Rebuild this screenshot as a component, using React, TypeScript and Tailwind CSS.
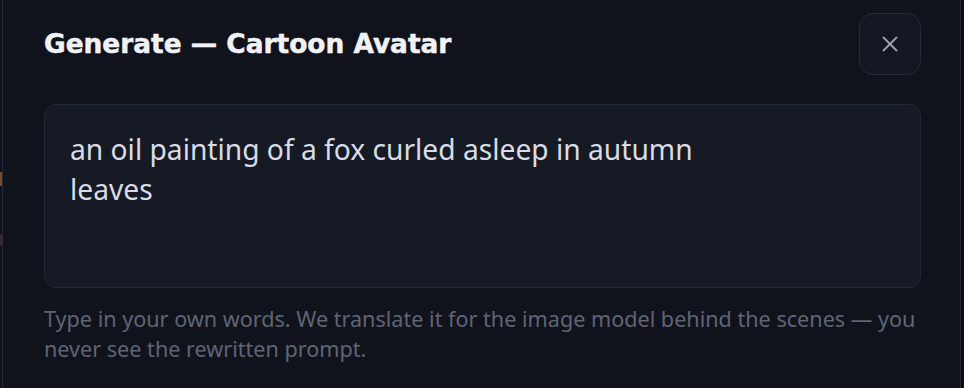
import { X } from "lucide-react";

export default function App() {
  return (
    <div className="flex h-[388px] w-[964px] overflow-hidden bg-[#0b0d14]">
      {/* sliver of the page behind the dialog */}
      <div className="flex w-[2px] flex-col bg-[#0f111a]">
        <div className="h-[172px]" />
        <div className="h-[14px] bg-[#7a4a2a]" />
        <div className="h-[48px]" />
        <div className="h-[12px] bg-[#3a2a30]" />
      </div>

      <div
        className="flex-1 border-x border-[#232838] bg-[#11131c] pl-[41px] pr-[39px] pt-[13px]"
        style={{ fontFamily: '"Noto Sans", "Open Sans", sans-serif' }}
      >
        <div className="flex items-start justify-between">
          <h2
            className="mt-[14px] text-[26.4px] font-bold leading-[34px] text-[#f1f2f6] [-webkit-text-stroke:0.5px_#f1f2f6]"
            style={{ fontFamily: '"DejaVu Sans", Verdana, sans-serif' }}
          >
            Generate — Cartoon Avatar
          </h2>
          <button className="flex h-[62px] w-[62px] items-center justify-center rounded-[14px] border border-[#262b3b] bg-[#141721] text-[#9aa0b2]">
            <X size={26} strokeWidth={1.75} />
          </button>
        </div>

        <div className="mt-[29px] h-[184px] rounded-[12px] border border-[#232838] bg-[#161a25] px-[25px] pt-[24px] text-[28.2px] leading-[40px] text-[#d9dce4]">
          an oil painting of a fox curled asleep in autumn
          <br />
          leaves
        </div>

        <p className="mt-[16px] whitespace-nowrap text-[21.6px] leading-[30px] text-[#5f6475]">
          Type in your own words. We translate it for the image model behind the scenes — you
          <br />
          never see the rewritten prompt.
        </p>
      </div>

      <div className="w-[3px] bg-[#0b0d14]" />
    </div>
  );
}
